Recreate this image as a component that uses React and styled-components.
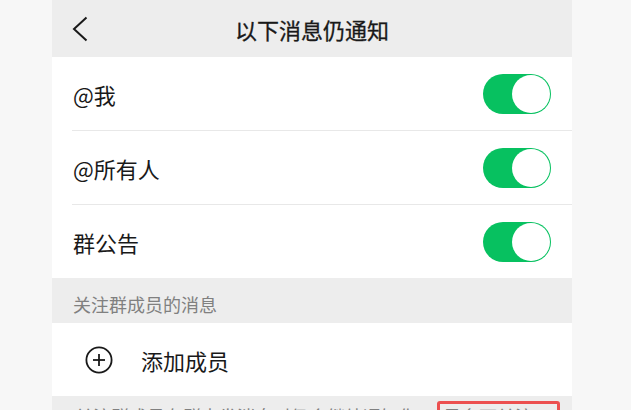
import React from 'react';
import styled, { createGlobalStyle } from 'styled-components';

const GlobalStyle = createGlobalStyle`
  html, body {
    margin: 0;
    padding: 0;
    background: #f7f7f7;
    height: 410px;
    overflow: hidden;
  }
  body {
    font-family: "Noto Sans CJK SC", "Noto Sans", sans-serif;
    color: #191919;
  }
`;

const Screen = styled.div`
  width: 520px;
  margin-left: 52px;
  background: #ededed;
  height: 410px;
  overflow: hidden;
  display: flex;
  flex-direction: column;
  & > * {
    flex-shrink: 0;
  }
`;

const Header = styled.div`
  height: 57px;
  display: grid;
  grid-template-columns: 60px 1fr 60px;
  align-items: center;
  background: #ededed;
`;

const BackButton = styled.div`
  display: flex;
  align-items: center;
  padding-left: 20px;
  height: 100%;
`;

const Title = styled.div`
  text-align: center;
  font-size: 22px;
  font-weight: 400;
  line-height: 24px;
  padding-top: 1px;
  -webkit-text-stroke: 0.3px #191919;
`;

const Group = styled.div`
  background: #fff;
`;

const Row = styled.div`
  height: 73px;
  display: flex;
  align-items: center;
  padding-right: 21px;
  border-top: ${(p) => (p.divider ? '1px solid #e8e8e8' : 'none')};
  margin-left: ${(p) => (p.divider ? '20px' : '0')};
  padding-left: ${(p) => (p.divider ? '1px' : '21px')};
`;

const Label = styled.div`
  flex: 1;
  font-size: 22px;
  line-height: 28px;
`;

const Track = styled.div`
  width: 68px;
  height: 40px;
  border-radius: 20px;
  background: ${(p) => (p.on ? '#07c160' : '#e5e5e5')};
  display: flex;
  align-items: center;
  justify-content: ${(p) => (p.on ? 'flex-end' : 'flex-start')};
  padding: 1px;
  box-sizing: border-box;
`;

const Knob = styled.div`
  width: 38px;
  height: 38px;
  border-radius: 50%;
  background: #fff;
`;

const SectionTitle = styled.div`
  padding: 14px 21px 7px;
  font-size: 18px;
  line-height: 24px;
  color: #808080;
`;

const AddRow = styled.div`
  height: 73px;
  display: flex;
  align-items: center;
  padding-left: 33px;
  gap: 28px;
  background: #fff;
`;

const AddText = styled.div`
  font-size: 22px;
  line-height: 28px;
`;

const Footer = styled.div`
  padding: 5px 10px 0 23px;
  font-size: 18px;
  line-height: 26px;
  color: #808080;
`;

const Highlight = styled.span`
  display: inline-block;
  border: 3px solid #ec5050;
  border-radius: 3px;
  padding: 0 10px 0 3px;
  margin-left: 2px;
  line-height: 24px;
`;

const Toggle = ({ on }) => (
  <Track on={on ? 1 : 0}>
    <Knob />
  </Track>
);

const settings = ['@我', '@所有人', '群公告'];

export default function App() {
  return (
    <>
      <GlobalStyle />
      <Screen>
        <Header>
          <BackButton>
            <svg width="16" height="26" viewBox="0 0 16 26">
              <polyline points="14.5,1.5 2,13 14.5,24.5" fill="none" stroke="#191919" strokeWidth="2" />
            </svg>
          </BackButton>
          <Title>以下消息仍通知</Title>
          <div />
        </Header>
        <Group>
          {settings.map((s, i) => (
            <Row key={s} divider={i > 0 ? 1 : 0}>
              <Label>{s}</Label>
              <Toggle on />
            </Row>
          ))}
        </Group>
        <SectionTitle>关注群成员的消息</SectionTitle>
        <AddRow>
          <svg width="28" height="28" viewBox="0 0 28 28">
            <circle cx="14" cy="14" r="12.6" fill="none" stroke="#191919" strokeWidth="1.8" />
            <line x1="8" y1="14" x2="20" y2="14" stroke="#191919" strokeWidth="1.8" />
            <line x1="14" y1="8" x2="14" y2="20" stroke="#191919" strokeWidth="1.8" />
          </svg>
          <AddText>添加成员</AddText>
        </AddRow>
        <Footer>
          关注群成员在群中发消息时仍会继续通知你，<Highlight>最多可关注 4</Highlight>人。
        </Footer>
      </Screen>
    </>
  );
}
